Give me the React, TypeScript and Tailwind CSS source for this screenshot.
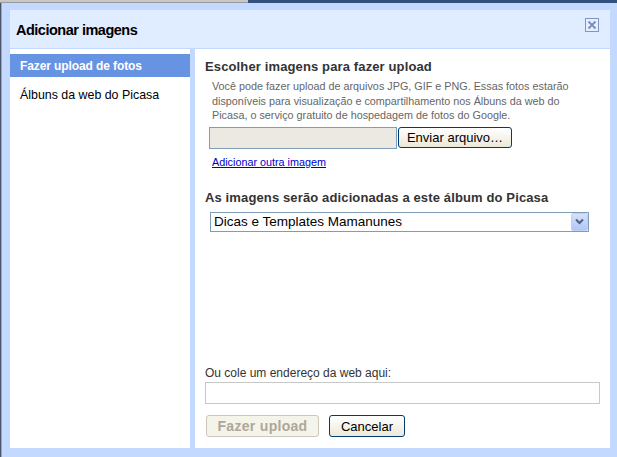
import React from "react";

const F = { fontFamily: '"Liberation Sans", Arial, sans-serif' };

export default function App() {
  return (
    <div className="w-[617px] h-[457px] flex flex-col overflow-hidden" style={F}>
      <div className="h-[3px] flex shrink-0">
        <div className="w-[248px] bg-[#c8c8c8] border-b border-[#9a9a9a]" />
        <div className="flex-1 bg-[#34507c]" />
      </div>
      <div className="flex-1 flex">
        <div className="w-[2px] flex shrink-0">
          <div className="w-px bg-[#4a5668]" />
          <div className="w-px bg-[#9aa8bc]" />
        </div>
        <div className="flex-1 bg-[#c3d9ff] pl-[8px] pr-[7px] pt-[7px] pb-[9px] flex flex-col">
          {/* Title bar */}
          <div className="h-[38px] bg-[#e0ecff] flex justify-between shrink-0">
            <div className="pl-[6px] pt-[11px] text-[14.5px] leading-[18px] font-bold text-black tracking-[-0.5px]">
              Adicionar imagens
            </div>
            <div className="pr-[11px] pt-[8px]">
              <div className="w-[14px] h-[14px] border border-[#7d96c4] bg-[#e6eeff] flex items-center justify-center">
                <svg width="10" height="10" viewBox="0 0 10 10">
                  <path d="M1.5 1.5 L8.5 8.5 M8.5 1.5 L1.5 8.5" stroke="#7890c0" strokeWidth="2" />
                </svg>
              </div>
            </div>
          </div>
          {/* Body */}
          <div className="flex-1 flex gap-[5px] mt-px">
            <div className="w-[180px] bg-white pt-[5px]">
              <div className="h-[23px] bg-[#6694e3] pl-[10px] flex items-center text-white font-bold text-[12px] tracking-[-0.1px]">
                Fazer upload de fotos
              </div>
              <div className="h-[23px] mt-[7px] pl-[10px] flex items-center text-black text-[12.4px]">
                Álbuns da web do Picasa
              </div>
            </div>
            <div className="flex-1 bg-white pl-[10px] pr-[10px] pt-[10px] pb-[11px] flex flex-col">
              <div className="text-[13px] leading-[16px] font-bold text-[#333] tracking-[0.13px]">
                Escolher imagens para fazer upload
              </div>
              <div className="pl-[7px] mt-[4px]">
                <p className="text-[10.8px] leading-[14.5px] text-[#666] max-w-[370px]">
                  Você pode fazer upload de arquivos JPG, GIF e PNG. Essas fotos estarão disponíveis para visualização e compartilhamento nos Álbuns da web do Picasa, o serviço gratuito de hospedagem de fotos do Google.
                </p>
              </div>
              <div className="flex items-start mt-[4px] ml-[4px]">
                <div className="w-[188px] h-[22px] bg-[#ebe9e1] border border-[#7f9db9]" />
                <button className="ml-px w-[114px] h-[21px] rounded-[3px] border border-[#003c74] bg-gradient-to-b from-white to-[#ece9d8] text-[13px] text-black leading-none flex items-center justify-center">
                  Enviar arquivo…
                </button>
              </div>
              <div className="mt-[7px] ml-[7px] text-[10.8px] leading-[13px]">
                <a className="text-[#0000cc] underline cursor-pointer">
                  Adicionar outra imagem
                </a>
              </div>
              <div className="mt-[21px] text-[13px] leading-[16px] font-bold text-[#333] tracking-[0.13px]">
                As imagens serão adicionadas a este álbum do Picasa
              </div>
              <div className="mt-[6px] ml-[5px] w-[379px] h-[20px] border border-[#7f9db9] flex items-center justify-between">
                <span className="pl-[3px] text-[13.5px] text-black leading-none">Dicas e Templates Mamanunes</span>
                <div className="w-[17px] h-[18px] bg-gradient-to-b from-[#d4e1fc] to-[#b2c7f4] border border-[#bcd0f8] rounded-[2px] flex items-center justify-center">
                  <svg width="9" height="7" viewBox="0 0 9 7">
                    <path d="M1 1.5 L4.5 5 L8 1.5" stroke="#4d6185" strokeWidth="2" fill="none" />
                  </svg>
                </div>
              </div>
              <div className="mt-auto">
                <div className="text-[12px] leading-[14px] text-[#333]">Ou cole um endereço da web aqui:</div>
                <div className="mt-[2px] w-[395px] h-[22px] border border-[#c8c8c8] bg-white" />
                <div className="mt-[11px] flex gap-[10px] pl-px">
                  <button className="w-[113px] h-[22px] rounded-[3px] border border-[#cac8bb] bg-[#f5f4ea] text-[14px] font-bold text-[#aca899] tracking-[0.3px] leading-none">
                    Fazer upload
                  </button>
                  <button className="w-[76px] h-[22px] rounded-[3px] border border-[#003c74] bg-gradient-to-b from-white to-[#ece9d8] text-[13px] text-black leading-none">
                    Cancelar
                  </button>
                </div>
              </div>
            </div>
          </div>
        </div>
      </div>
    </div>
  );
}
